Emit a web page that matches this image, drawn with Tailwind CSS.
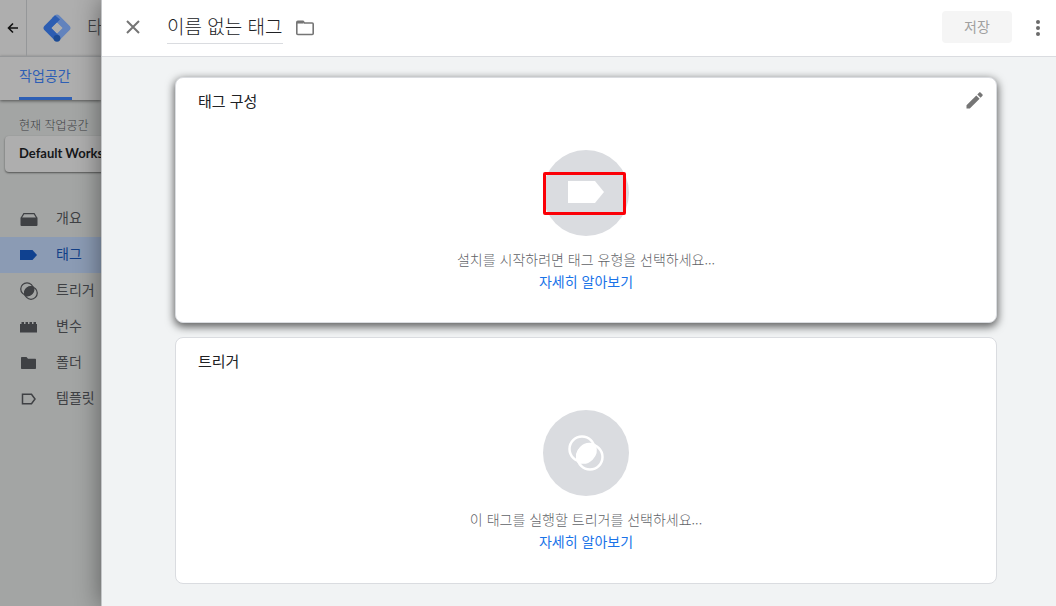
<!DOCTYPE html>
<html lang="ko">
<head>
    <meta charset="UTF-8">
    <meta name="viewport" content="width=device-width, initial-scale=1.0">
    <title>태그 관리자</title>
    <script src="https://cdn.jsdelivr.net/npm/@tailwindcss/browser@4"></script>
</head>
<body class="flex min-h-screen overflow-x-hidden bg-[#f1f3f4] font-['Noto_Sans_CJK_KR',sans-serif] font-light text-[#202124]">
    <!-- Dimmed page behind the sheet -->
    <aside class="w-[101px] shrink-0 overflow-hidden bg-[#a3a5a4] text-[#3f4144]">
        <header class="flex h-14 items-stretch bg-[#aeaeae]">
            <button aria-label="뒤로" class="flex w-[27px] shrink-0 items-center justify-center border-r border-[#959799]">
                <svg class="h-3 w-3" viewBox="0 0 12 12" fill="none" stroke="#111" stroke-width="1.6"><path d="M11 6H2M6 1.5 1.5 6 6 10.5"/></svg>
            </button>
            <a href="#" aria-label="홈" class="flex shrink-0 items-center pl-4">
                <svg class="h-7 w-7" viewBox="0 0 28 28">
                    <path d="M12 1.300c1.100-1.100 2.900-1.100 4 0L26.700 12c1.100 1.100 1.100 2.900 0 4L16 26.700 11.500 22l8-8L9 3.800z" fill="#6283bd"/>
                    <path d="M12 1.300 1.300 12c-1.100 1.100-1.100 2.900 0 4L12 26.700l4.500-4.500L8.500 14l8.500-8.500z" fill="#2c5db2"/>
                    <path d="m14 8.700 5.300 5.300-5.300 5.300L8.700 14z" fill="#aeaeae"/>
                    <circle cx="14" cy="24.300" r="3.400" fill="#1c4b94"/>
                </svg>
            </a>
            <span class="shrink-0 self-center pb-[2px] pl-4 text-xl whitespace-nowrap">태그 관리자</span>
        </header>
        <div class="h-11 border-t border-[#959799] bg-[#aeaeae] pl-[19px] shadow-[0_1px_3px_rgba(0,0,0,0.5)]">
            <a href="#" class="flex h-[43px] w-[53px] items-center border-b-[3px] border-[#2e5fb5] pb-1 text-sm font-normal whitespace-nowrap text-[#2e5fb5]">작업공간</a>
        </div>
        <p class="mt-4 pl-[19px] text-xs leading-[18px] whitespace-nowrap">현재 작업공간</p>
        <button class="mt-[2px] ml-[5px] h-9 w-[240px] rounded bg-[#aeaeae] pl-[14px] text-left font-[Lato,sans-serif] text-[13px] font-bold text-[#161719] shadow-[0_1px_2px_rgba(0,0,0,0.5)]">Default Workspace</button>
        <nav class="mt-[29px] text-sm font-normal whitespace-nowrap">
            <a href="#" class="flex h-9 items-center gap-[18px] pl-5">
                <svg class="h-[18px] w-[18px] shrink-0" viewBox="0 0 18 18" fill="#3f4144"><path d="M3.500 3h11L17.500 8H16.200L13.800 4.200H4.200L1.800 8H.5zM.5 7.500h17V15a1 1 0 0 1-1 1h-15a1 1 0 0 1-1-1z"/></svg>
                <span class="pb-1">개요</span>
            </a>
            <a href="#" class="flex h-9 items-center gap-[18px] bg-[#8b9bb4] pl-5 text-[#123f87]">
                <svg class="h-[18px] w-[18px] shrink-0" viewBox="0 0 18 18" fill="#0f4190"><path d="M0 4h12.500L17 9l-4.500 5H0z"/></svg>
                <span class="pb-1">태그</span>
            </a>
            <a href="#" class="flex h-9 items-center gap-[18px] pl-5">
                <svg class="h-[18px] w-[18px] shrink-0" viewBox="0 0 36 36" fill="none" stroke="#3f4144" stroke-width="2.500"><circle cx="14" cy="14" r="12.500"/><circle cx="22" cy="22" r="12.500"/><path d="M26.500 10.200A12.500 12.500 0 0 1 10.200 26.500 12.500 12.500 0 0 1 26.500 10.200z" fill="#3f4144"/></svg>
                <span class="pb-1">트리거</span>
            </a>
            <a href="#" class="flex h-9 items-center gap-[18px] pl-5">
                <svg class="h-[18px] w-[18px] shrink-0" viewBox="0 0 18 18" fill="#3f4144"><path d="M0 6h1.500V4H4v2h1.500V4H8v2h1.500V4H12v2h1.500V4H16v2h1v8.500H0z"/></svg>
                <span class="pb-1">변수</span>
            </a>
            <a href="#" class="flex h-9 items-center gap-[18px] pl-5">
                <svg class="h-[18px] w-[18px] shrink-0" viewBox="0 0 18 18" fill="#3f4144"><path d="M2 3h4.500L8 4.800h7c.6 0 1 .4 1 1V14c0 .6-.4 1-1 1H2c-.6 0-1-.4-1-1V4c0-.6.4-1 1-1z"/></svg>
                <span class="pb-1">폴더</span>
            </a>
            <a href="#" class="flex h-9 items-center gap-[18px] pl-5">
                <svg class="h-[18px] w-[18px] shrink-0" viewBox="0 0 18 18" fill="none" stroke="#3f4144" stroke-width="1.500"><path d="M2.500 4.300h9L15 9l-3.500 4.700h-9z"/></svg>
                <span class="pb-1">템플릿</span>
            </a>
        </nav>
    </aside>

    <!-- Tag editor sheet -->
    <div class="relative z-10 min-w-0 flex-1 border-l border-[#c4c6c8] bg-[#f1f3f4] shadow-[0_0_24px_rgba(0,0,0,0.45)]">
        <header class="flex h-[57px] items-center border-b border-[#dadce0] bg-white pr-[10px] pl-[23px]">
            <button aria-label="닫기" class="pb-[2px]">
                <svg class="h-4 w-4" viewBox="0 0 16 16" fill="none" stroke="#757575" stroke-width="2"><path d="m2 2 12 12M14 2 2 14"/></svg>
            </button>
            <input type="text" value="이름 없는 태그" aria-label="태그 이름" class="ml-[26px] h-8 w-[116px] border-b border-[#dadce0] pb-1 text-[19px] leading-7 outline-none">
            <button aria-label="폴더" class="ml-3">
                <svg class="h-5 w-5" viewBox="0 0 20 20" fill="none" stroke="#757575" stroke-width="1.600"><path d="M1.800 4.500v11c0 .6.4 1 1 1h14.400c.6 0 1-.4 1-1v-9.500c0-.6-.4-1-1-1H9.500L8 3.200H2.800c-.6 0-1 .6-1 1.300z"/><path d="M2 4.300h6.500" stroke-width="2.500"/></svg>
            </button>
            <button disabled class="mr-[18px] mb-[2px] ml-auto h-8 w-[70px] rounded bg-[#f5f5f5] pb-[2px] text-sm font-normal text-[#a0a0a0]">저장</button>
            <button aria-label="더보기" class="flex w-4 justify-center">
                <svg class="h-4 w-1" viewBox="0 0 4 16" fill="#6b6b6b"><circle cx="2" cy="2" r="2"/><circle cx="2" cy="8" r="2"/><circle cx="2" cy="14" r="2"/></svg>
            </button>
        </header>

        <main class="flex flex-col gap-[14px] pt-5 pr-[59px] pb-[22px] pl-[73px]">
            <section class="h-[246px] rounded-lg border border-[#dadce0] bg-white shadow-[0_3px_8px_1px_rgba(0,0,0,0.6)]">
                <div class="flex h-[72px] items-start justify-between pt-3 pr-[11px] pl-[22px]">
                    <h2 class="text-[15px] leading-[22px] font-normal">태그 구성</h2>
                    <button aria-label="수정">
                        <svg class="h-5 w-5" viewBox="0 0 20 20" fill="#757575"><path d="M1.500 15.200v3.300h3.300L14.600 8.700l-3.300-3.300zM17.500 5.800c.4-.4.4-1 0-1.300l-2-2c-.4-.4-1-.4-1.300 0l-1.900 1.900 3.300 3.300z"/></svg>
                    </button>
                </div>
                <div class="flex flex-col items-center">
                    <div class="relative flex h-[86px] w-[86px] items-center justify-center rounded-full bg-[#dadce0]">
                        <svg class="h-6 w-9" viewBox="0 0 36 24" fill="#fff"><path d="M0 0h27l9 11-9 11H0z"/></svg>
                        <span class="absolute top-[22px] left-0 h-[43px] w-[83px] rounded-xs border-3 border-[#fb0007]"></span>
                    </div>
                    <p class="mt-3 text-sm leading-[22px] text-[#5f6368]">설치를 시작하려면 태그 유형을 선택하세요...</p>
                    <a href="#" class="text-sm leading-[22px] font-normal text-[#1a73e8]">자세히 알아보기</a>
                </div>
            </section>

            <section class="h-[247px] rounded-lg border border-[#dadce0] bg-white">
                <div class="flex h-[72px] items-start pt-3 pl-[22px]">
                    <h2 class="text-[15px] leading-[22px] font-normal">트리거</h2>
                </div>
                <div class="flex flex-col items-center">
                    <div class="flex h-[86px] w-[86px] items-center justify-center rounded-full bg-[#dadce0]">
                        <svg class="h-9 w-9" viewBox="0 0 36 36" fill="none" stroke="#fff" stroke-width="2.500"><circle cx="14" cy="14" r="12.500"/><circle cx="22" cy="22" r="12.500"/><path d="M26.500 10.200A12.500 12.500 0 0 1 10.200 26.500 12.500 12.500 0 0 1 26.500 10.200z" fill="#fff"/></svg>
                    </div>
                    <p class="mt-3 text-sm leading-[22px] text-[#5f6368]">이 태그를 실행할 트리거를 선택하세요...</p>
                    <a href="#" class="text-sm leading-[22px] font-normal text-[#1a73e8]">자세히 알아보기</a>
                </div>
            </section>
        </main>
    </div>
</body>
</html>
